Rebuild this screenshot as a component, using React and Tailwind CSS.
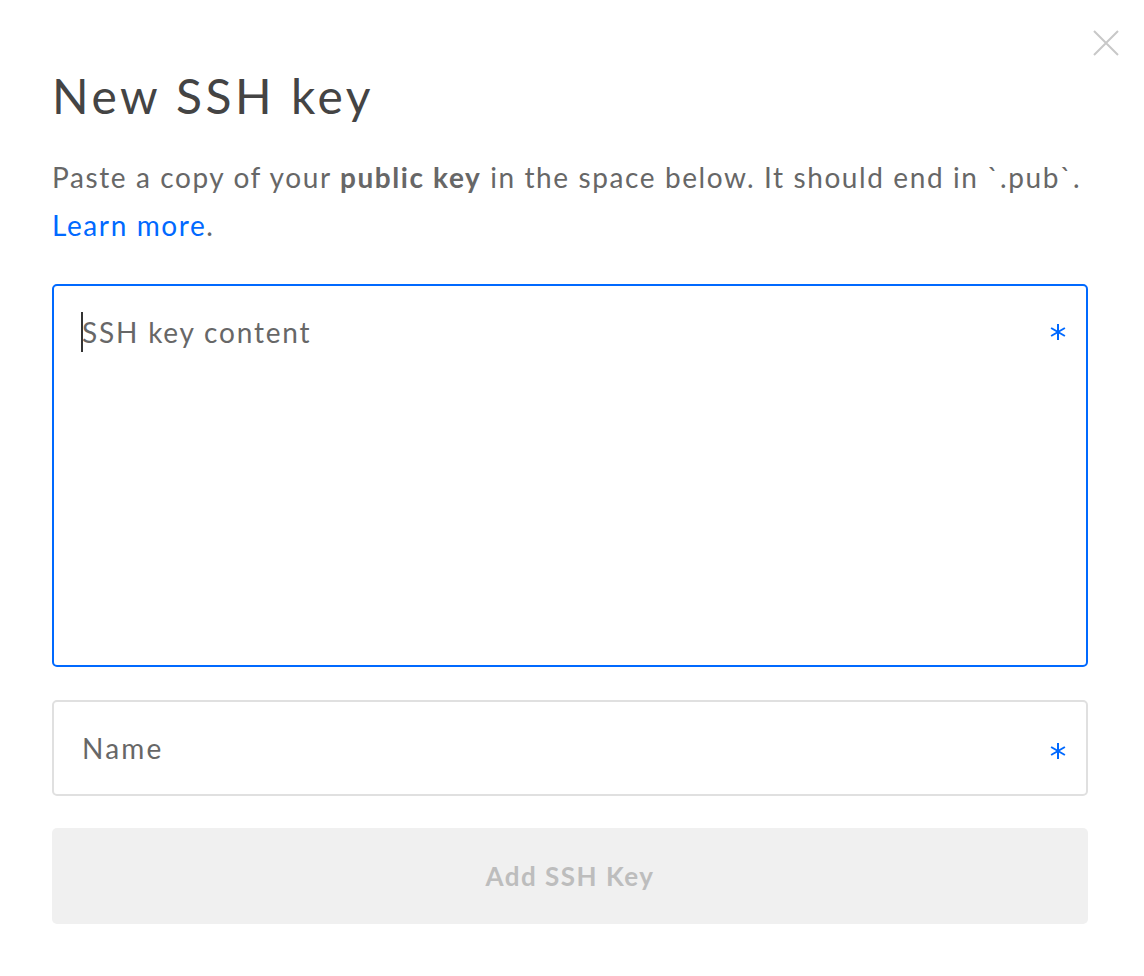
function Asterisk() {
  return (
    <svg viewBox="0 0 16 16" width="16" height="16" fill="none" stroke="#0069ff" strokeWidth="2">
      <path d="M8 0 L8 16 M1.1 4 L14.9 12 M14.9 4 L1.1 12" />
    </svg>
  );
}

export default function App() {
  return (
    <div className="relative w-[1144px] h-[976px] bg-white" style={{ fontFamily: 'Lato, "Open Sans", sans-serif' }}>
      <button className="absolute left-[1092px] top-[29px] w-[28px] h-[28px] text-[#c8c8c8]">
        <svg viewBox="0 0 28 28" width="28" height="28" fill="none" stroke="currentColor" strokeWidth="2">
          <path d="M2 2 L26 26 M26 2 L2 26" />
        </svg>
      </button>
      <div className="pl-[52px] pr-[56px] pt-[64px]">
        <h1 className="text-[48px] leading-[64px] tracking-[3.5px] text-[#444444] font-normal">New SSH key</h1>
        <p className="mt-[25px] text-[28px] leading-[48px] tracking-[1.6px] text-[#676767]">
          Paste a copy of your <span className="font-bold">public key</span> in the space below. It should end in `.pub`.
          <br />
          <span className="text-[#0069ff]">Learn more</span>.
        </p>
        <div className="mt-[35px] h-[383px] border-2 border-[#0069ff] rounded-[5px] flex items-start justify-between pl-[27px] pr-[20px] pt-[26px]">
          <div className="flex items-center text-[28px] leading-[40px] tracking-[1.8px] text-[#676767]">
            <span className="w-[2px] h-[40px] bg-[#333] mr-[-1px]"></span>
            <span>SSH key content</span>
          </div>
          <div className="mt-[12px]"><Asterisk /></div>
        </div>
        <div className="mt-[33px] h-[96px] border-2 border-[#e0e0e0] rounded-[5px] flex items-center justify-between pl-[28px] pr-[20px]">
          <span className="text-[28px] tracking-[2.2px] text-[#676767]">Name</span>
          <div className="mt-[6px]"><Asterisk /></div>
        </div>
        <button className="mt-[32px] w-full h-[96px] bg-[#f0f0f0] rounded-[5px] text-[26px] tracking-[1.5px] font-bold text-[#bdbdbd]">
          Add SSH Key
        </button>
      </div>
    </div>
  );
}
